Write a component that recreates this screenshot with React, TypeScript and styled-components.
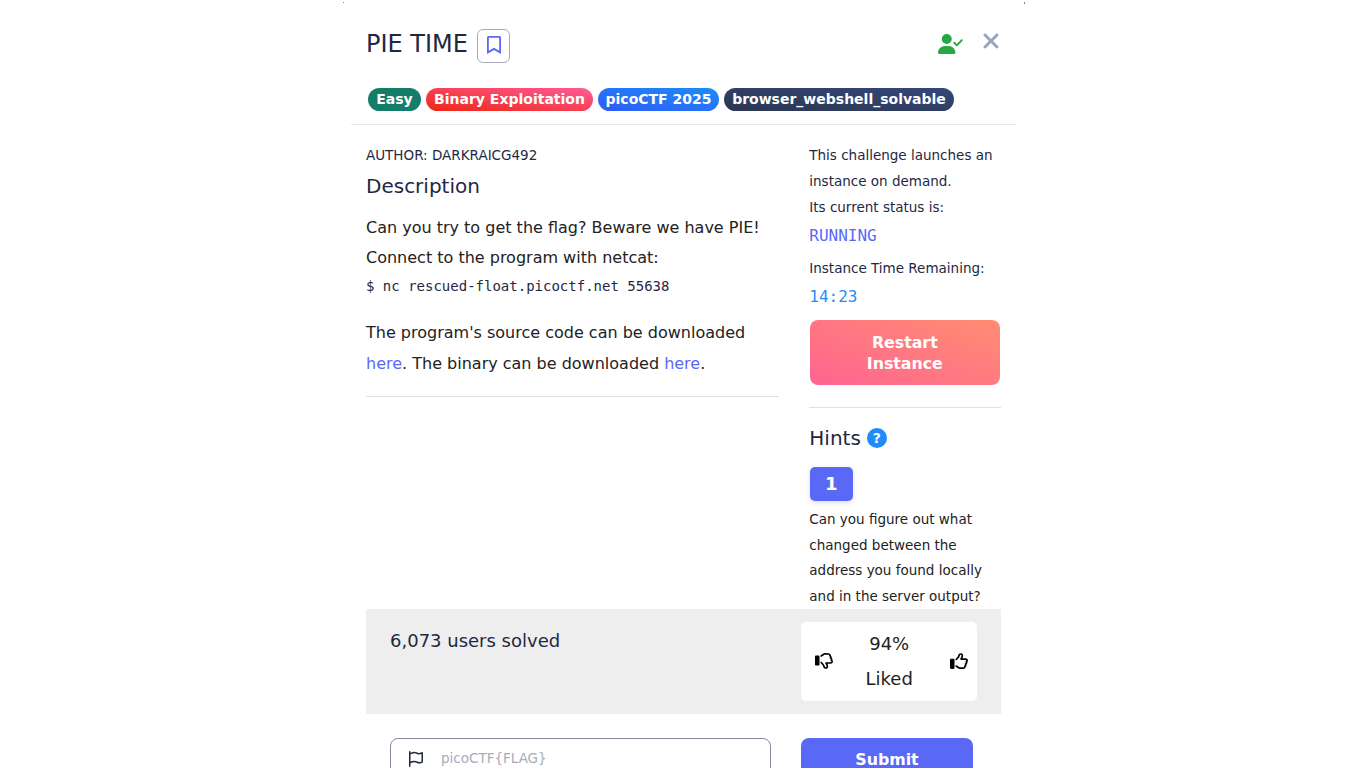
import React from "react";
import styled, { createGlobalStyle } from "styled-components";
import {
  FaUserCheck,
  FaXmark,
  FaRegThumbsDown,
  FaRegThumbsUp,
  FaRegFlag,
} from "react-icons/fa6";

const GlobalStyle = createGlobalStyle`
  * { box-sizing: border-box; }
  body {
    margin: 0;
    background: #fff;
    color: #222;
    font-family: "DejaVu Sans", sans-serif;
    font-size: 16px;
    line-height: 1.9;
  }
  p, h3, h5 { margin: 0; font-weight: 400; }
`;

const navy = "#1f2843";
const indigo = "#5969f6";

const Page = styled.div`
  height: 768px;
  overflow: hidden;
`;

const Modal = styled.div`
  position: relative;
  width: 682px;
  height: 900px;
  margin-left: 343px;
  padding: 0 9px 0 8px;
  display: flex;
  flex-direction: column;
`;

const CornerMark = styled.span<{ $right?: boolean }>`
  position: absolute;
  top: 2px;
  ${(p) => (p.$right ? "right: 0;" : "left: 0;")}
  width: 1px;
  height: ${(p) => (p.$right ? 2 : 1)}px;
  background: #888;
`;

const Header = styled.header`
  height: 125px;
  padding: 29px 15px 0;
  border-bottom: 1px solid #e9e9ec;
  flex: none;
`;

const TitleRow = styled.div`
  display: flex;
  align-items: flex-start;
  height: 59px;
`;

const Title = styled.h3`
  color: ${navy};
  font-size: 24px;
  line-height: 30px;
`;

const BookmarkButton = styled.button`
  width: 33px;
  height: 34px;
  margin-left: 9px;
  padding: 0 0 2px 1px;
  display: flex;
  align-items: center;
  justify-content: center;
  color: ${indigo};
  background: #fff;
  border: 1px solid #a5acb8;
  border-radius: 6px;
`;

const HeaderActions = styled.div`
  display: flex;
  align-items: flex-start;
  margin-left: auto;
  margin-right: -2px;
  color: #28a745;
`;

const SolvedByUser = styled(FaUserCheck)`
  width: 25px;
  height: 20px;
  margin-top: 5px;
`;

const CloseButton = styled.button`
  display: flex;
  margin: 0 0 0 16px;
  padding: 0;
  border: 0;
  background: none;
  color: #9aa4bf;
`;

const Tags = styled.div`
  display: flex;
  gap: 5px;
  padding-left: 2px;
`;

const Tag = styled.span<{ $bg: string; $width: number }>`
  width: ${(p) => p.$width}px;
  height: 23px;
  border-radius: 12px;
  background: ${(p) => p.$bg};
  color: #fff;
  font-size: 14px;
  font-weight: 700;
  line-height: 22px;
  text-align: center;
  white-space: nowrap;
`;

const Body = styled.div`
  display: grid;
  grid-template-columns: 413px 191.7px;
  column-gap: 30.3px;
  height: 484px;
  padding: 18px 15px 0;
  overflow: hidden;
  flex: none;
`;

const Small = styled.p`
  font-size: 13.5px;
  line-height: 25.84px;
  color: ${navy};
`;

const HintText = styled(Small)`
  color: #222;
  line-height: 25.7px;
`;

const Heading = styled.h5`
  display: flex;
  align-items: center;
  gap: 6px;
  color: ${navy};
  font-size: 20px;
  line-height: 26px;
`;

const DescriptionHeading = styled(Heading)`
  margin-top: 4px;
`;

const HintsHeading = styled(Heading)`
  margin-top: 17px;
`;

const Description = styled.div`
  margin-top: 14px;
`;

const Paragraph = styled.p`
  line-height: 30.4px;
`;

const Command = styled.code`
  display: block;
  color: ${navy};
  font-family: "DejaVu Sans Mono", monospace;
  font-size: 14px;
  line-height: 24px;
  margin-bottom: 20.7px;
`;

const Link = styled.a`
  color: ${indigo};
  text-decoration: none;
`;

const Divider = styled.hr<{ $top: number }>`
  width: 100%;
  height: 1px;
  margin: ${(p) => p.$top}px 0 0;
  border: 0;
  background: #e0e0e2;
`;

const Status = styled.p<{ $color: string }>`
  color: ${(p) => p.$color};
  font-family: "DejaVu Sans Mono", monospace;
  line-height: 30.4px;
`;

const TimeBlock = styled.div`
  margin-top: 5px;
`;

const RestartButton = styled.button`
  display: block;
  width: 190px;
  height: 65px;
  margin: 8px 0 0 0.5px;
  padding: 0 40px;
  border: 0;
  border-radius: 8px;
  background: linear-gradient(23deg, #ff6491, #ff8d72);
  color: #fff;
  font: 700 15.8px/21px "DejaVu Sans", sans-serif;
`;

const Help = styled.span`
  width: 20px;
  height: 20px;
  border-radius: 50%;
  background: #1e8cfb;
  color: #fff;
  font-size: 14px;
  font-weight: 700;
  line-height: 20px;
  text-align: center;
`;

const HintNumber = styled.button`
  display: block;
  width: 43px;
  height: 34px;
  margin: 16px 0 5.7px 0.5px;
  padding: 0;
  border: 0;
  border-radius: 5px;
  background: ${indigo};
  color: #fff;
  font: 700 18px/34px "DejaVu Sans", sans-serif;
  box-shadow: 0 2px 5px rgba(50, 50, 93, 0.16);
`;

const SolvedBar = styled.section`
  display: flex;
  justify-content: space-between;
  height: 105px;
  margin: 0 15px;
  padding: 13px 24px;
  background: #eee;
  flex: none;
`;

const Solved = styled.p`
  color: ${navy};
  font-size: 18px;
  line-height: 38px;
`;

const Rating = styled.div`
  display: flex;
  align-items: center;
  justify-content: space-between;
  width: 176px;
  height: 79px;
  padding: 0 9px 0 14px;
  border-radius: 5px;
  background: #fff;
  color: #000;

  svg {
    margin-bottom: 2px;
  }
`;

const RatingText = styled.p`
  width: 60px;
  margin-right: 4.6px;
  color: #222;
  font-size: 18px;
  line-height: 34.6px;
  text-align: center;
`;

const FlagForm = styled.form`
  display: flex;
  justify-content: space-between;
  padding: 24px 43px 0 39px;
`;

const FlagField = styled.label`
  display: flex;
  align-items: center;
  width: 381px;
  height: 41px;
  padding-left: 17px;
  gap: 17px;
  border: 1px solid #858aa0;
  border-radius: 8px;
  color: ${navy};
`;

const FlagInput = styled.input`
  flex: 1;
  min-width: 0;
  padding: 0 0 2px;
  border: 0;
  outline: 0;
  background: none;
  font: 13.5px "DejaVu Sans", sans-serif;
  &::placeholder { color: #a8abb7; opacity: 1; }
`;

const Submit = styled.button`
  width: 172px;
  height: 44px;
  padding: 0;
  border: 0;
  border-radius: 8px;
  background: ${indigo};
  color: #fff;
  font: 700 15.8px/44px "DejaVu Sans", sans-serif;
`;

const tags = [
  { label: "Easy", bg: "#147d69", width: 53 },
  { label: "Binary Exploitation", bg: "linear-gradient(to top right, #f02614, #ff5c98)", width: 167 },
  { label: "picoCTF 2025", bg: "linear-gradient(to top right, #2f5cf8, #1c8cf8)", width: 121 },
  { label: "browser_webshell_solvable", bg: "linear-gradient(to top right, #2b3650, #34487a)", width: 230 },
];

function BookmarkIcon() {
  return (
    <svg width="14" height="18" viewBox="0 0 14 18" fill="none" stroke="currentColor" strokeWidth="1.8">
      <path d="M.9 1.6Q.9.9 1.6.9H12.4Q13.1.9 13.1 1.6V16.4L7 12.9.9 16.4Z" />
    </svg>
  );
}

export default function App() {
  return (
    <Page>
      <GlobalStyle />
      <Modal>
        <CornerMark />
        <CornerMark $right />
        <Header>
          <TitleRow>
            <Title>PIE TIME</Title>
            <BookmarkButton aria-label="Bookmark"><BookmarkIcon /></BookmarkButton>
            <HeaderActions>
              <SolvedByUser />
              <CloseButton aria-label="Close"><FaXmark size={24} /></CloseButton>
            </HeaderActions>
          </TitleRow>
          <Tags>
            {tags.map((t) => (
              <Tag key={t.label} $bg={t.bg} $width={t.width}>{t.label}</Tag>
            ))}
          </Tags>
        </Header>
        <Body>
          <div>
            <Small>AUTHOR: DARKRAICG492</Small>
            <DescriptionHeading>Description</DescriptionHeading>
            <Description>
              <Paragraph>Can you try to get the flag? Beware we have PIE!</Paragraph>
              <Paragraph>Connect to the program with netcat:</Paragraph>
              <Command>$ nc rescued-float.picoctf.net 55638</Command>
              <Paragraph>
                The program's source code can be downloaded <Link>here</Link>. The binary can be
                downloaded <Link>here</Link>.
              </Paragraph>
            </Description>
            <Divider $top={16.6} />
          </div>
          <div>
            <Small>This challenge launches an instance on demand.<br />Its current status is:</Small>
            <Status $color={indigo}>RUNNING</Status>
            <TimeBlock>
              <Small>Instance Time Remaining:</Small>
              <Status $color="#1e8cfb">14:23</Status>
            </TimeBlock>
            <RestartButton>Restart Instance</RestartButton>
            <Divider $top={22} />
            <HintsHeading>Hints <Help>?</Help></HintsHeading>
            <HintNumber>1</HintNumber>
            <HintText>
              Can you figure out what changed between the address you found locally and in the server output?
            </HintText>
          </div>
        </Body>
        <SolvedBar>
          <Solved>6,073 users solved</Solved>
          <Rating>
            <FaRegThumbsDown size={18} />
            <RatingText>94% Liked</RatingText>
            <FaRegThumbsUp size={18} />
          </Rating>
        </SolvedBar>
        <FlagForm>
          <FlagField>
            <FaRegFlag size={16} />
            <FlagInput placeholder="picoCTF{FLAG}" />
          </FlagField>
          <Submit type="button">Submit</Submit>
        </FlagForm>
      </Modal>
    </Page>
  );
}
